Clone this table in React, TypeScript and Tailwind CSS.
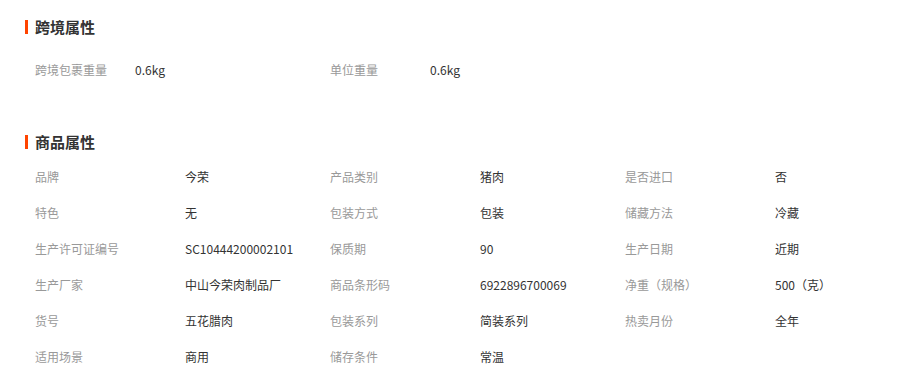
import React from "react";

const font = { fontFamily: '"Microsoft YaHei", "Noto Sans CJK SC", "Noto Sans", sans-serif' };

function Title({ children }: { children: React.ReactNode }) {
  return (
    <div className="flex items-center h-[20px] pl-[25px]">
      <span className="w-[3px] h-[14px] bg-[#ff4400] mr-[7px]" />
      <span className="text-[15px] font-bold text-[#333] leading-[20px]">{children}</span>
    </div>
  );
}

type Pair = [string, string];

const cross: Pair[] = [
  ["跨境包裹重量", "0.6kg"],
  ["单位重量", "0.6kg"],
];

const attrs: Pair[] = [
  ["品牌", "今荣"],
  ["产品类别", "猪肉"],
  ["是否进口", "否"],
  ["特色", "无"],
  ["包装方式", "包装"],
  ["储藏方法", "冷藏"],
  ["生产许可证编号", "SC10444200002101"],
  ["保质期", "90"],
  ["生产日期", "近期"],
  ["生产厂家", "中山今荣肉制品厂"],
  ["商品条形码", "6922896700069"],
  ["净重（规格）", "500（克）"],
  ["货号", "五花腊肉"],
  ["包装系列", "简装系列"],
  ["热卖月份", "全年"],
  ["适用场景", "商用"],
  ["储存条件", "常温"],
];

export default function App() {
  return (
    <div className="w-[904px] h-[383px] bg-white pt-[17px]" style={font}>
      <Title>跨境属性</Title>
      <div className="grid grid-cols-[295px_295px] pl-[35px] mt-[15px]">
        {cross.map(([k, v]) => (
          <div key={k} className="flex items-center h-[36px] text-[12px]">
            <span className="w-[100px] text-[#999]">{k}</span>
            <span className="text-[#333]">{v}</span>
          </div>
        ))}
      </div>
      <div className="mt-[44px]">
        <Title>商品属性</Title>
      </div>
      <div className="grid grid-cols-[295px_295px_295px] pl-[35px] mt-[7px]">
        {attrs.map(([k, v]) => (
          <div key={k} className="flex items-center h-[36px] text-[12px]">
            <span className="w-[150px] text-[#999]">{k}</span>
            <span className="text-[#333]">{v}</span>
          </div>
        ))}
      </div>
    </div>
  );
}
